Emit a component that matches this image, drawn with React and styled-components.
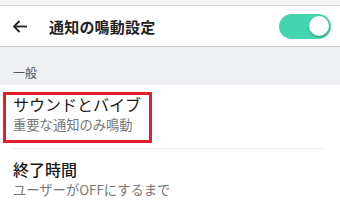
import React, { useState } from 'react';
import styled, { createGlobalStyle } from 'styled-components';

const GlobalStyle = createGlobalStyle`
	body {
		margin: 0;
		background: #fff;
		font-family: "Noto Sans CJK JP", "Noto Sans", sans-serif;
	}
`;

const Screen = styled.div`
	width: 340px;
	height: 208px;
	overflow: hidden;
	background: #fff;
`;

const StatusStrip = styled.div`
	height: 5px;
	background: #f3f3f3;
	border-bottom: 1px solid #d9d9d9;
`;

const Header = styled.header`
	height: 40px;
	display: flex;
	align-items: center;
	padding: 0 9px 0 12px;
	border-bottom: 1px solid #c9c9c9;
	box-shadow: 0 1px 1px rgba(0, 0, 0, 0.05);
`;

const BackButton = styled.button`
	border: none;
	background: none;
	padding: 0;
	width: 18px;
	height: 14px;
	display: flex;
	align-items: center;
	color: #222;
`;

const Title = styled.h1`
	margin: 0 0 0 19px;
	flex: 1;
	font-size: 15px;
	font-weight: 700;
	color: #222;
	letter-spacing: 0.2px;
`;

const Toggle = styled.button`
	position: relative;
	width: 52px;
	height: 25px;
	border: none;
	padding: 0;
	border-radius: 13px;
	background: ${(p) => (p.on ? '#45d5ae' : '#c7c7c7')};
	cursor: pointer;

	span {
		position: absolute;
		top: 2px;
		left: ${(p) => (p.on ? '30px' : '2px')};
		width: 20px;
		height: 20px;
		border-radius: 50%;
		background: #fff;
		box-shadow: 0 1px 2px rgba(0, 0, 0, 0.35);
	}
`;

const SectionLabel = styled.div`
	height: 38px;
	box-sizing: border-box;
	padding: 18px 0 0 13px;
	background: #eff0f4;
	font-size: 12px;
	line-height: 16px;
	color: #555;
`;

const Item = styled.div`
	padding: ${(p) => (p.highlight ? '7px 0 5px 3px' : '11px 0 0 13px')};
`;

const TextBlock = styled.div`
	width: fit-content;
	display: flex;
	flex-direction: column;
	gap: 2px;
	${(p) =>
		p.highlight &&
		`
		border: 3px solid #e31e2c;
		padding: 0 8px 7px 7px;
	`}
`;

const ItemTitle = styled.div`
	font-size: 16px;
	line-height: 19px;
	color: #1a1a1a;
	font-weight: ${(p) => (p.strong ? 500 : 400)};
`;

const ItemSub = styled.div`
	font-size: 13.3px;
	line-height: 17px;
	color: #777;
`;

const Divider = styled.hr`
	margin: 0 15px 0 13px;
	border: none;
	border-top: 1px solid #e8e8e8;
`;

const ArrowIcon = () => (
	<svg width="16" height="13" viewBox="0 0 16 13" fill="none" stroke="currentColor" strokeWidth="1.8">
		<path d="M15 6.5H2" />
		<path d="M7.5 1L2 6.5L7.5 12" />
	</svg>
);

export default function App() {
	const [on, setOn] = useState(true);

	return (
		<Screen>
			<GlobalStyle />
			<StatusStrip />
			<Header>
				<BackButton aria-label="back">
					<ArrowIcon />
				</BackButton>
				<Title>通知の鳴動設定</Title>
				<Toggle on={on} onClick={() => setOn(!on)}>
					<span />
				</Toggle>
			</Header>
			<SectionLabel>一般</SectionLabel>
			<Item highlight>
				<TextBlock highlight>
					<ItemTitle>サウンドとバイブ</ItemTitle>
					<ItemSub>重要な通知のみ鳴動</ItemSub>
				</TextBlock>
			</Item>
			<Divider />
			<Item>
				<TextBlock>
					<ItemTitle strong>終了時間</ItemTitle>
					<ItemSub>ユーザーがOFFにするまで</ItemSub>
				</TextBlock>
			</Item>
		</Screen>
	);
}
